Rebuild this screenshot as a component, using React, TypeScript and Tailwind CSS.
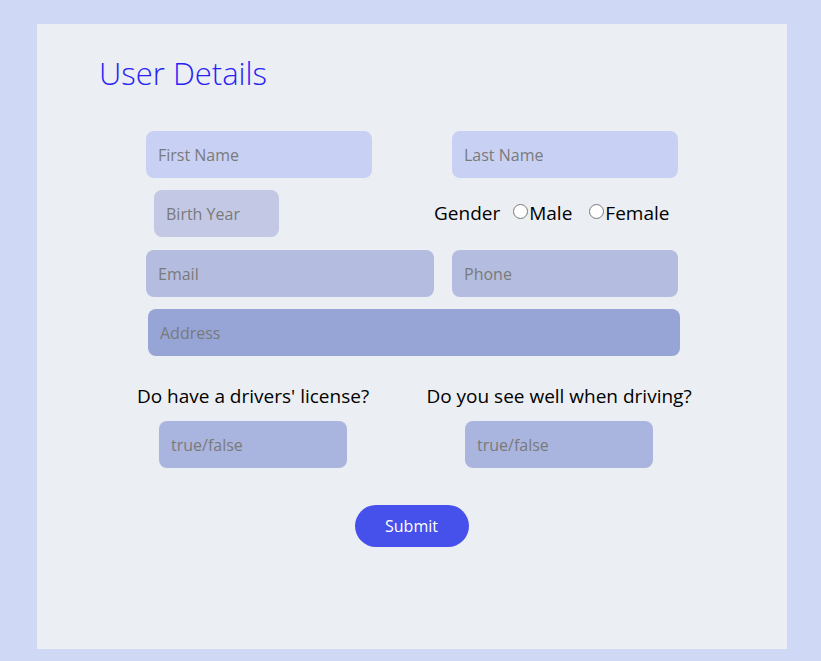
export default function App() {
  const font = { fontFamily: '"Segoe UI", "Open Sans", "Noto Sans", sans-serif' };
  const input =
    "h-[47px] rounded-lg px-3 text-[16px] text-gray-800 placeholder:text-[#7a7a7a] outline-none";

  return (
    <div className="min-h-[661px] w-[821px] bg-[#cfd9f6] pt-[24px] pb-[12px]" style={font}>
      <div className="ml-[37px] h-[625px] w-[750px] bg-[#ebeef2] pt-[29px]">
        {/* Title */}
        <h1 className="ml-[62px] text-[31px] font-light leading-[40px] text-[#2a1ff5]">
          User Details
        </h1>

        <form className="mt-[38px] flex flex-col">
          {/* Name row */}
          <div className="ml-[109px] flex gap-[80px]">
            <input className={`${input} w-[226px] bg-[#c8d1f3]`} placeholder="First Name" />
            <input className={`${input} w-[226px] bg-[#c8d1f3]`} placeholder="Last Name" />
          </div>

          {/* Birth year + gender */}
          <div className="ml-[117px] mt-[12px] flex items-center">
            <input className={`${input} w-[125px] bg-[#c3c9e5]`} placeholder="Birth Year" />
            <div className="ml-[155px] flex items-center text-[19px] text-black">
              <span className="mr-[13px]">Gender</span>
              <label className="flex items-center">
                <input type="radio" name="gender" className="mb-[5px] mr-[1px] h-[15px] w-[15px]" />
                Male
              </label>
              <label className="ml-[17px] flex items-center">
                <input type="radio" name="gender" className="mb-[5px] mr-[1px] h-[15px] w-[15px]" />
                Female
              </label>
            </div>
          </div>

          {/* Contact row */}
          <div className="ml-[109px] mt-[13px] flex gap-[18px]">
            <input className={`${input} w-[288px] bg-[#b4bddf]`} placeholder="Email" />
            <input className={`${input} w-[226px] bg-[#b4bddf]`} placeholder="Phone" />
          </div>

          <div className="ml-[111px] mt-[12px]">
            <input className={`${input} w-[532px] bg-[#97a5d6]`} placeholder="Address" />
          </div>

          {/* Questions */}
          <div className="ml-[76px] mt-[26px] flex">
            <div className="flex w-[280px] flex-col items-center">
              <span className="text-[19px] leading-[28px] text-black">Do have a drivers' license?</span>
              <input className={`${input} mt-[11px] w-[188px] bg-[#aab5df]`} placeholder="true/false" />
            </div>
            <div className="ml-[16px] flex w-[300px] flex-col items-center">
              <span className="text-[19px] leading-[28px] text-black">Do you see well when driving?</span>
              <input className={`${input} mt-[11px] w-[188px] bg-[#aab5df]`} placeholder="true/false" />
            </div>
          </div>

          <div className="mt-[37px] flex justify-center">
            <button
              type="button"
              className="ml-[-1px] h-[42px] w-[114px] rounded-full bg-[#4650ea] text-[16px] text-white"
            >
              Submit
            </button>
          </div>
        </form>
      </div>
    </div>
  );
}
